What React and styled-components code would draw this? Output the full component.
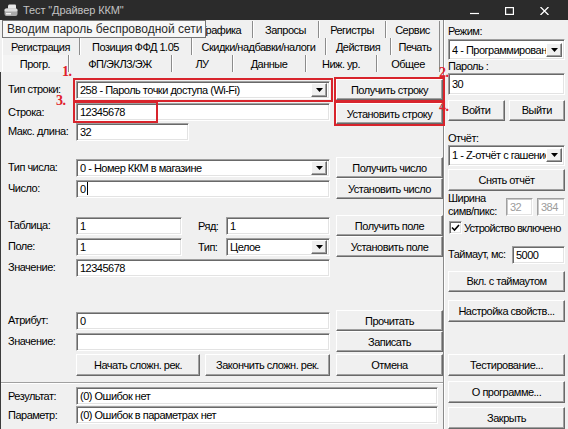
import React from "react";
import styled, { createGlobalStyle } from "styled-components";

const Global = createGlobalStyle`
  html, body { margin: 0; padding: 0; background: #f0f0f0; overflow: hidden; }
  * { box-sizing: border-box; }
`;

const Window = styled.div`
  position: relative;
  width: 568px;
  height: 429px;
  display: flex;
  flex-direction: column;
  background: #f0f0f0;
  font-family: "Liberation Sans", Arial, sans-serif;
  font-size: 11px;
  letter-spacing: -0.5px;
  color: #000;
  overflow: hidden;
`;

const TitleBar = styled.div`
  flex: none;
  height: 20px;
  background: #2b2b2b;
  display: flex;
  align-items: center;
  padding-left: 4px;
`;

const TitleText = styled.span`
  margin-left: 5px;
  color: #c2c2c2;
  font-size: 11px;
  letter-spacing: -0.1px;
  white-space: nowrap;
`;

const Controls = styled.div`
  margin-left: auto;
  display: flex;
  height: 100%;
  padding-right: 6px;
`;

const CtlBtn = styled.div`
  width: 35px;
  display: flex;
  justify-content: center;
  padding-top: 7px;
`;

const Body = styled.div`
  flex: 1;
  display: flex;
  min-height: 0;
`;

const LeftCol = styled.div`
  position: relative;
  width: 444px;
  flex: none;
  display: flex;
  flex-direction: column;
  border-right: 1px solid #8a8a8a;
  & > * { flex-shrink: 0; }
`;

const Tabs = styled.div`
  padding-top: 1px;
  height: 52px;
`;

const TabRow = styled.div`
  display: flex;
  height: 17px;
  padding-left: 2px;
`;

const Tab = styled.div`
  flex: none;
  width: ${(p) => p.$w}px;
  height: 17px;
  display: flex;
  align-items: center;
  justify-content: center;
  white-space: nowrap;
  border-right: 1px solid #8c8c8c;
  box-shadow: inset 1px 0 0 #ffffff;
  background: ${(p) => (p.$active ? "#f4f4f4" : "#f0f0f0")};
`;

const Tooltip = styled.div`
  position: absolute;
  left: 2px;
  top: 20px;
  width: 204px;
  height: 18px;
  border: 1px solid #767676;
  background: #f7f7f7;
  color: #2a2a2a;
  font-size: 12px;
  letter-spacing: 0;
  padding-left: 4px;
  display: flex;
  align-items: center;
  white-space: nowrap;
  z-index: 5;
`;

const Lower = styled.div`
  flex: 1;
  display: flex;
  flex-direction: column;
  border-left: 1px solid #3c3c3c;
`;

const Page = styled.div`
  flex: none;
  height: 311px;
  padding-left: 7px;
  display: flex;
  flex-direction: column;
  border-bottom: 1px solid #a0a0a0;
  box-shadow: 0 1px 0 #ffffff;
  & > * { flex-shrink: 0; }
`;

const FormRow = styled.div`
  display: grid;
  grid-template-columns: 62px 254px 107px;
  column-gap: 6px;
  align-items: center;
  height: ${(p) => p.$h || 21}px;
  margin-top: ${(p) => p.$mt || 0}px;
`;

const Label = styled.div`
  white-space: nowrap;
  line-height: ${(p) => p.$lh || 13}px;
  margin-top: ${(p) => p.$mt || 0}px;
`;

const Cell = styled.div`
  position: relative;
  display: flex;
  align-items: center;
  gap: ${(p) => p.$gap || 0}px;
`;

const SubLabel = styled.div`
  width: 44px;
  padding-left: 16px;
  white-space: nowrap;
`;

const Field = styled.div`
  flex: ${(p) => (p.$w ? "none" : "1 1 auto")};
  width: ${(p) => (p.$w ? p.$w + "px" : "100%")};
  min-width: 0;
  height: 18px;
  margin-top: ${(p) => p.$mt || 0}px;
  margin-left: ${(p) => p.$ml || 0}px;
  background: #ffffff;
  border: 1px solid;
  border-color: #a0a0a0 #ffffff #ffffff #a0a0a0;
  box-shadow: inset 1px 1px 0 ${(p) => (p.$disabled ? "#c8c8c8" : "#696969")},
    inset -1px -1px 0 #e3e3e3;
  padding: 0 3px;
  display: flex;
  align-items: center;
  white-space: nowrap;
  overflow: hidden;
  color: ${(p) => (p.$disabled ? "#9c9c9c" : "#000")};
`;

const Combo = styled(Field)`
  padding-right: 2px;
  overflow: visible;
  ${(p) => p.$mark && "outline: 2px solid #d8242c; outline-offset: 1px;"}
`;

const ComboText = styled.span`
  flex: 1;
  min-width: 0;
  overflow: hidden;
  white-space: nowrap;
`;

const DropBtn = styled.div`
  flex: none;
  width: 16px;
  height: 14px;
  background: #f0f0f0;
  border: 1px solid;
  border-color: #ffffff #696969 #696969 #ffffff;
  box-shadow: inset -1px -1px 0 #a0a0a0;
  display: flex;
  align-items: center;
  justify-content: center;
`;

const Caret = styled.span`
  display: inline-block;
  width: 1px;
  height: 13px;
  background: #000;
  margin-left: 1px;
`;

const MarkBox = styled.div`
  position: absolute;
  left: ${(p) => p.$l}px;
  top: ${(p) => p.$t}px;
  width: ${(p) => p.$w}px;
  height: ${(p) => p.$h}px;
  border: 2px solid #d8242c;
  pointer-events: none;
`;

const Button = styled.button`
  flex: ${(p) => (p.$grow ? "1 1 0" : "none")};
  width: ${(p) => (p.$w ? p.$w + "px" : p.$grow ? "auto" : "100%")};
  min-width: 0;
  height: ${(p) => p.$h || 21}px;
  margin: ${(p) => p.$mt || 0}px 0 0 0;
  padding: 0;
  font: inherit;
  letter-spacing: inherit;
  color: #000;
  background: #f0f0f0;
  border: 1px solid;
  border-color: #ffffff #696969 #696969 #ffffff;
  box-shadow: inset -1px -1px 0 #a0a0a0;
  display: flex;
  align-items: center;
  justify-content: center;
  white-space: nowrap;
  overflow: hidden;
  ${(p) => p.$mark && "outline: 2px solid #d8242c; outline-offset: 0px;"}
`;

const Annot = styled.div`
  position: absolute;
  left: ${(p) => p.$x}px;
  top: ${(p) => p.$y}px;
  font-family: "Liberation Serif", "Times New Roman", serif;
  font-weight: bold;
  font-size: 14px;
  line-height: 14px;
  letter-spacing: -0.5px;
  color: #e0212b;
  z-index: 20;
`;

const ResultArea = styled.div`
  flex: 1;
  padding: 4px 0 0 7px;
  display: flex;
  flex-direction: column;
  gap: 1px;
`;

const ResultRow = styled.div`
  display: grid;
  grid-template-columns: 68px 362px;
  align-items: center;
  height: 18px;
`;

const RightCol = styled.div`
  flex: 1;
  min-width: 0;
  display: flex;
  flex-direction: column;
  border-left: 1px solid #ffffff;
  padding: 0 3px 0 3px;
  & > * { flex-shrink: 0; }
`;

const HRow = styled.div`
  display: flex;
  align-items: ${(p) => p.$align || "center"};
  gap: ${(p) => p.$gap || 0}px;
  height: ${(p) => (p.$h ? p.$h + "px" : "auto")};
  margin-top: ${(p) => p.$mt || 0}px;
  white-space: nowrap;
`;

const CheckRow = styled(HRow)`
  letter-spacing: -0.7px;
  margin-right: -3px;
  overflow: hidden;
`;

const FixedLabel = styled.div`
  flex: none;
  width: ${(p) => p.$w}px;
  line-height: 13px;
  white-space: nowrap;
`;

const CheckBox = styled.div`
  flex: none;
  width: 13px;
  height: 13px;
  margin-left: 1px;
  margin-right: 2px;
  background: #fff;
  border: 1px solid;
  border-color: #a0a0a0 #ffffff #ffffff #a0a0a0;
  box-shadow: inset 1px 1px 0 #696969, inset -1px -1px 0 #e3e3e3;
  display: flex;
  align-items: center;
  justify-content: center;
`;

const Arrow = () => (
  <svg width="7" height="4" viewBox="0 0 7 4">
    <path d="M0 0H7L3.5 4Z" fill="#000" />
  </svg>
);

const ComboBox = ({ children, ...rest }) => (
  <Combo {...rest}>
    <ComboText>{children}</ComboText>
    <DropBtn>
      <Arrow />
    </DropBtn>
  </Combo>
);

const AppIcon = () => (
  <svg width="14" height="13" viewBox="0 0 14 13">
    <path d="M4 1.5 Q4.5 0.5 5.5 0.5 H11 Q12 0.5 12 1.5 V5 H4Z" fill="#e6e6e6" />
    <rect x="0.5" y="4.5" width="13" height="7.5" rx="2" fill="#a9a9a9" />
    <rect x="0.5" y="4.5" width="13" height="3" rx="1.5" fill="#dcdcdc" />
    <rect x="2" y="9" width="5" height="1.5" fill="#f2f2f2" />
  </svg>
);

const row1 = [
  ["", 96],
  ["", 92],
  ["Графика", 63],
  ["Запросы", 66],
  ["Регистры", 67],
  ["Сервис", 54],
];
const row2 = [
  ["Регистрация", 78],
  ["Позиция ФФД 1.05", 112],
  ["Скидки/надбавки/налоги", 134],
  ["Действия", 65],
  ["Печать", 49],
];
const row3 = [
  ["Прогр.", 67, true],
  ["ФП/ЭКЛЗ/ЭЖ", 103],
  ["ЛУ", 61],
  ["Данные", 73],
  ["Ниж. ур.", 71],
  ["Общее", 63],
];

const TabLine = ({ tabs }) => (
  <TabRow>
    {tabs.map(([t, w, a], i) => (
      <Tab key={i} $w={w} $active={a}>
        {t}
      </Tab>
    ))}
  </TabRow>
);

export default function App() {
  return (
    <Window>
      <Global />
      <TitleBar>
        <AppIcon />
        <TitleText>Тест "Драйвер ККМ"</TitleText>
        <Controls>
          <CtlBtn>
            <svg width="9" height="8" viewBox="0 0 9 8">
              <path d="M0 6.5H9" stroke="#fff" strokeWidth="1.2" />
            </svg>
          </CtlBtn>
          <CtlBtn>
            <svg width="9" height="8" viewBox="0 0 9 8">
              <rect x="0.6" y="0.6" width="7.8" height="6.8" fill="none" stroke="#fff" strokeWidth="1.2" />
            </svg>
          </CtlBtn>
          <CtlBtn>
            <svg width="9" height="8" viewBox="0 0 9 8">
              <path d="M0.5 0L8.5 8M8.5 0L0.5 8" stroke="#fff" strokeWidth="1.3" />
            </svg>
          </CtlBtn>
        </Controls>
      </TitleBar>

      <Tooltip>Вводим пароль беспроводной сети</Tooltip>

      <Body>
        <LeftCol>
          <Tabs>
            <TabLine tabs={row1} />
            <TabLine tabs={row2} />
            <TabLine tabs={row3} />
          </Tabs>

          <Lower>
            <Page>
              <FormRow $mt={7}>
                <Label>Тип строки:</Label>
                <ComboBox $mark>258 - Пароль точки доступа (Wi-Fi)</ComboBox>
                <Button $mark>Получить строку</Button>
              </FormRow>
              <FormRow>
                <Label>Строка:</Label>
                <Cell>
                  <Field>12345678</Field>
                  <MarkBox $l={-3} $t={-2} $w={85} $h={22} />
                </Cell>
                <Button $mark $mt={3}>Установить строку</Button>
              </FormRow>
              <FormRow>
                <Label>Макс. длина:</Label>
                <Cell>
                  <Field $w={113}>32</Field>
                </Cell>
                <div />
              </FormRow>

              <FormRow $mt={15}>
                <Label>Тип числа:</Label>
                <ComboBox>0 - Номер ККМ в магазине</ComboBox>
                <Button>Получить число</Button>
              </FormRow>
              <FormRow>
                <Label>Число:</Label>
                <Field>
                  0<Caret />
                </Field>
                <Button>Установить число</Button>
              </FormRow>

              <FormRow $mt={16}>
                <Label>Таблица:</Label>
                <Cell>
                  <Field $w={106}>1</Field>
                  <SubLabel>Ряд:</SubLabel>
                  <Field $w={104}>1</Field>
                </Cell>
                <Button>Получить поле</Button>
              </FormRow>
              <FormRow>
                <Label>Поле:</Label>
                <Cell>
                  <Field $w={106}>1</Field>
                  <SubLabel>Тип:</SubLabel>
                  <ComboBox $w={104}>Целое</ComboBox>
                </Cell>
                <Button>Установить поле</Button>
              </FormRow>
              <FormRow>
                <Label>Значение:</Label>
                <Field>12345678</Field>
                <div />
              </FormRow>

              <FormRow $mt={32}>
                <Label>Атрибут:</Label>
                <Field>0</Field>
                <Button>Прочитать</Button>
              </FormRow>
              <FormRow>
                <Label>Значение:</Label>
                <Field />
                <Button>Записать</Button>
              </FormRow>
              <FormRow $mt={1} $h={23}>
                <div />
                <Cell $gap={5}>
                  <Button $w={124} $h={22}>Начать сложн. рек.</Button>
                  <Button $w={125} $h={22}>Закончить сложн. рек.</Button>
                </Cell>
                <Button $h={22}>Отмена</Button>
              </FormRow>
            </Page>

            <ResultArea>
              <ResultRow>
                <Label>Результат:</Label>
                <Field>(0) Ошибок нет</Field>
              </ResultRow>
              <ResultRow>
                <Label>Параметр:</Label>
                <Field>(0) Ошибок в параметрах нет</Field>
              </ResultRow>
            </ResultArea>
          </Lower>

          <Annot $x={62} $y={45}>1.</Annot>
          <Annot $x={439} $y={46}>2.</Annot>
          <Annot $x={56} $y={74}>3.</Annot>
          <Annot $x={439} $y={80}>4.</Annot>
        </LeftCol>

        <RightCol>
          <Label $mt={5}>Режим:</Label>
          <ComboBox $mt={1}>4 - Программирование</ComboBox>
          <Label $mt={1} $lh={11}>Пароль :</Label>
          <Field $mt={1}>30</Field>
          <HRow $mt={5} $gap={4}>
            <Button $grow>Войти</Button>
            <Button $grow>Выйти</Button>
          </HRow>
          <Label $mt={11} $lh={12}>Отчёт:</Label>
          <ComboBox $mt={1}>1 - Z-отчёт с гашением</ComboBox>
          <Button $mt={3} $h={22}>Снять отчёт</Button>
          <HRow $mt={1} $h={26}>
            <FixedLabel $w={58}>
              Ширина
              <br />
              симв/пикс:
            </FixedLabel>
            <Field $w={27} $mt={4} $disabled>
              32
            </Field>
            <Field $w={28} $mt={4} $ml={4} $disabled>
              384
            </Field>
          </HRow>
          <CheckRow $mt={3} $h={14}>
            <CheckBox>
              <svg width="9" height="8" viewBox="0 0 9 8">
                <path d="M1 3.5L3.5 6L8 1" fill="none" stroke="#000" strokeWidth="1.6" />
              </svg>
            </CheckBox>
            <span>Устройство включено</span>
          </CheckRow>
          <HRow $mt={11}>
            <FixedLabel $w={64}>Таймаут, мс:</FixedLabel>
            <Field>5000</Field>
          </HRow>
          <Button $mt={7}>Вкл. с таймаутом</Button>
          <Button $mt={8} $h={22}>Настройка свойств...</Button>
          <Button $mt={32} $h={22}>Тестирование...</Button>
          <Button $mt={5} $h={22}>О программе...</Button>
          <Button $mt={4} $h={22}>Закрыть</Button>
        </RightCol>
      </Body>
    </Window>
  );
}
